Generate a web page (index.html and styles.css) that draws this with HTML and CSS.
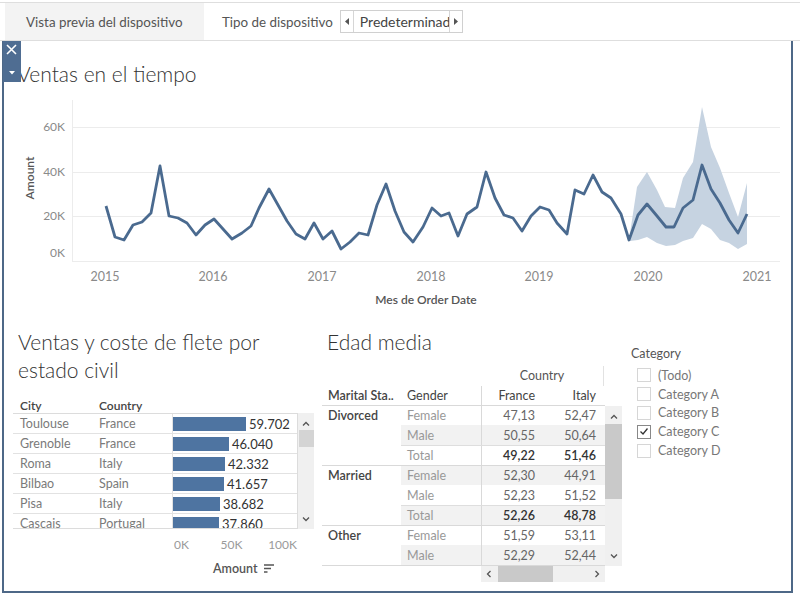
FILE: index.html
```html
<!DOCTYPE html>
<html lang="es">
<head>
<meta charset="utf-8">
<title>Vista previa del dispositivo</title>
<link rel="stylesheet" href="styles.css">
</head>
<body>
<div class="topbar">
  <div class="tab">Vista previa del dispositivo</div>
  <div class="devtype">
    <span class="devlabel">Tipo de dispositivo</span>
    <div class="select">
      <span class="sarrow left"><svg width="4" height="7" viewBox="0 0 4 7"><path d="M4 0 L0 3.5 L4 7 Z" fill="#555"/></svg></span>
      <span class="selval">Predeterminado</span>
      <span class="sarrow right"><svg width="4" height="7" viewBox="0 0 4 7"><path d="M0 0 L4 3.5 L0 7 Z" fill="#555"/></svg></span>
    </div>
  </div>
</div>

<div class="frame">
  <div class="closebtn">
    <svg width="18" height="41" viewBox="0 0 18 41">
      <path d="M4 4 L13 13 M13 4 L4 13" stroke="#fff" stroke-width="1.6" fill="none"/>
      <path d="M6 30 L12 30 L9 33.5 Z" fill="#fff"/>
    </svg>
  </div>

  <section class="timeline">
    <h1 class="title main-title">Ventas en el tiempo</h1>
    <svg class="linechart" width="787" height="228" viewBox="4 88 787 228">
      <g class="grid">
        <line x1="72" y1="127.5" x2="780" y2="127.5"/>
        <line x1="72" y1="172.5" x2="780" y2="172.5"/>
        <line x1="72" y1="216.5" x2="780" y2="216.5"/>
        <line x1="72" y1="261.5" x2="780" y2="261.5"/>
        <line x1="72.5" y1="100" x2="72.5" y2="262"/>
      </g>
      <g class="ylab">
        <text x="65" y="131">60K</text>
        <text x="65" y="176">40K</text>
        <text x="65" y="220">20K</text>
        <text x="65" y="257">0K</text>
      </g>
      <text class="axtitle" transform="translate(34,178) rotate(-90)">Amount</text>
      <g class="xlab">
        <text x="105" y="281">2015</text>
        <text x="213" y="281">2016</text>
        <text x="322" y="281">2017</text>
        <text x="431" y="281">2018</text>
        <text x="539" y="281">2019</text>
        <text x="648" y="281">2020</text>
        <text x="757" y="281">2021</text>
      </g>
      <text class="axtitle" x="426" y="304">Mes de Order Date</text>
      <polygon class="band" points="629,240 637,187 647,172 657,190 665,207 675,208 683,178 693,162 702,107 711,147 720,168 729,193 738,217 747,183 747,244 738,249 729,243 720,240 711,229 702,224 693,238 683,241 675,245 666,246 657,243 647,237 638,240 630,241"/>
      <polyline class="line" points="106,206 115,237 124,240 133,225 142,222 151,213 160,166 169,216 178,218 187,223 196,235 205,225 214,219 223,229 232,239 242,233 251,226 259,208 269,189 278,205 287,221 296,234 305,239 314,223 323,239 332,231 341,249 350,242 359,233 368,235 377,205 386,184 395,211 404,232 413,242 423,227 432,208 441,216 449,213 458,236 467,214 477,207 486,172 495,198 504,215 513,218 522,231 531,216 540,207 549,210 557,223 567,234 575,190 584,194 593,175 602,192 611,198 621,214 629,240 638,215 647,204 657,216 666,227 674,227 683,208 693,200 702,165 711,189 720,203 729,220 738,233 747,214"/>
    </svg>
  </section>

  <section class="bottom">
    <div class="panel left">
      <h2 class="title sub-title">Ventas y coste de flete por estado civil</h2>
      <div class="bars">
        <div class="bhead"><span class="bc1">City</span><span class="bc2">Country</span></div>
        <div class="bbody-wrap">
          <div class="bbody">
            <div class="brow"><span class="bc1">Toulouse</span><span class="bc2">France</span><span class="bcell"><i class="bar" style="width:73px"></i><b>59.702</b></span></div>
            <div class="brow"><span class="bc1">Grenoble</span><span class="bc2">France</span><span class="bcell"><i class="bar" style="width:56px"></i><b>46.040</b></span></div>
            <div class="brow"><span class="bc1">Roma</span><span class="bc2">Italy</span><span class="bcell"><i class="bar" style="width:52px"></i><b>42.332</b></span></div>
            <div class="brow"><span class="bc1">Bilbao</span><span class="bc2">Spain</span><span class="bcell"><i class="bar" style="width:51px"></i><b>41.657</b></span></div>
            <div class="brow"><span class="bc1">Pisa</span><span class="bc2">Italy</span><span class="bcell"><i class="bar" style="width:47px"></i><b>38.682</b></span></div>
            <div class="brow"><span class="bc1">Cascais</span><span class="bc2">Portugal</span><span class="bcell"><i class="bar" style="width:46px"></i><b>37.860</b></span></div>
          </div>
          <div class="vscroll small">
            <svg class="arrow-up" width="8" height="5" viewBox="0 0 8 5"><path d="M1 4.5 L4 1.5 L7 4.5" stroke="#555" stroke-width="1.3" fill="none"/></svg>
            <div class="thumb"></div>
            <svg class="arrow-down" width="8" height="5" viewBox="0 0 8 5"><path d="M1 0.5 L4 3.5 L7 0.5" stroke="#555" stroke-width="1.3" fill="none"/></svg>
          </div>
        </div>
        <div class="baxis"><span>0K</span><span>50K</span><span>100K</span></div>
        <div class="bamount">Amount
          <svg width="10" height="9" viewBox="0 0 10 9"><path d="M0 1 H10 M0 4.5 H7 M0 8 H3.5" stroke="#555" stroke-width="1.5"/></svg>
        </div>
      </div>
    </div>

    <div class="panel mid">
      <h2 class="title sub-title">Edad media</h2>
      <div class="pivot">
        <div class="phead">
          <div class="ph1"><span class="ph-country">Country</span></div>
          <div class="ph2"><span class="pm">Marital Sta..</span><span class="pg">Gender</span><span class="pv first">France</span><span class="pv">Italy</span></div>
        </div>
        <div class="pbody-wrap">
          <div class="pbody">
            <div class="pgroup">
              <div class="pm">Divorced</div>
              <div class="prows">
                <div class="prow"><span class="pg">Female</span><span class="pv first">47,13</span><span class="pv">52,47</span></div>
                <div class="prow band"><span class="pg">Male</span><span class="pv first">50,55</span><span class="pv">50,64</span></div>
                <div class="prow total"><span class="pg">Total</span><span class="pv first">49,22</span><span class="pv">51,46</span></div>
              </div>
            </div>
            <div class="pgroup">
              <div class="pm">Married</div>
              <div class="prows">
                <div class="prow band"><span class="pg">Female</span><span class="pv first">52,30</span><span class="pv">44,91</span></div>
                <div class="prow"><span class="pg">Male</span><span class="pv first">52,23</span><span class="pv">51,52</span></div>
                <div class="prow total band"><span class="pg">Total</span><span class="pv first">52,26</span><span class="pv">48,78</span></div>
              </div>
            </div>
            <div class="pgroup last">
              <div class="pm">Other</div>
              <div class="prows">
                <div class="prow"><span class="pg">Female</span><span class="pv first">51,59</span><span class="pv">53,11</span></div>
                <div class="prow band"><span class="pg">Male</span><span class="pv first">52,29</span><span class="pv">52,44</span></div>
              </div>
            </div>
          </div>
          <div class="vscroll tall">
            <svg class="arrow-up" width="8" height="5" viewBox="0 0 8 5"><path d="M1 4.5 L4 1.5 L7 4.5" stroke="#555" stroke-width="1.3" fill="none"/></svg>
            <div class="thumb"></div>
            <svg class="arrow-down" width="8" height="5" viewBox="0 0 8 5"><path d="M1 0.5 L4 3.5 L7 0.5" stroke="#555" stroke-width="1.3" fill="none"/></svg>
          </div>
        </div>
        <div class="hscroll">
          <svg width="5" height="8" viewBox="0 0 5 8"><path d="M4.5 1 L1.5 4 L4.5 7" stroke="#555" stroke-width="1.3" fill="none"/></svg>
          <div class="hthumb"></div>
          <svg class="hright" width="5" height="8" viewBox="0 0 5 8"><path d="M0.5 1 L3.5 4 L0.5 7" stroke="#555" stroke-width="1.3" fill="none"/></svg>
        </div>
      </div>
    </div>

    <div class="panel right">
      <div class="ftitle">Category</div>
      <ul class="flist">
        <li><span class="cb"></span>(Todo)</li>
        <li><span class="cb"></span>Category A</li>
        <li><span class="cb"></span>Category B</li>
        <li><span class="cb checked"><svg width="10" height="9" viewBox="0 0 10 9"><path d="M1.5 4.5 L4 7 L8.5 1.5" stroke="#333" stroke-width="1.3" fill="none"/></svg></span>Category C</li>
        <li><span class="cb"></span>Category D</li>
      </ul>
    </div>
  </section>
</div>
</body>
</html>
```
FILE: styles.css
```css
* { box-sizing: border-box; }
html, body { margin: 0; padding: 0; }
body {
  width: 800px;
  height: 595px;
  overflow: hidden;
  background: #fff;
  font-family: "Lato", "Open Sans", sans-serif;
  color: #333;
}

/* top bar */
.topbar {
  margin-top: 2px;
  height: 39px;
  border-top: 1px solid #dedede;
  border-bottom: 1px solid #dedede;
  display: flex;
}
.tab {
  margin-left: 5px;
  width: 199px;
  background: #f3f3f3;
  padding-left: 21px;
  display: flex;
  align-items: center;
  font-size: 13.4px;
  color: #555;
}
.devtype {
  display: flex;
  align-items: center;
  padding-left: 18px;
  font-size: 13.4px;
  color: #555;
}
.select {
  margin-left: 7px;
  width: 123px;
  height: 23px;
  border: 1px solid #d0d0d0;
  display: flex;
  align-items: stretch;
}
.sarrow {
  width: 13px;
  display: flex;
  align-items: center;
  justify-content: center;
  flex: none;
}
.sarrow.left { border-right: 1px solid #d6d6d6; }
.sarrow.right { border-left: 1px solid #d6d6d6; }
.selval {
  flex: 1;
  overflow: hidden;
  white-space: nowrap;
  padding-left: 6px;
  line-height: 21px;
  font-size: 14px;
  color: #444;
}

/* frame */
.frame {
  position: relative;
  margin-left: 2px;
  width: 791px;
  height: 552px;
  border: 2px solid #4e6887;
  border-top: 0;
}
.closebtn {
  position: absolute;
  left: -1px;
  top: 0;
  width: 18px;
  height: 41px;
  background: #4f6d92;
}
.closebtn svg { display: block; }

.title {
  margin: 0;
  font-weight: 300;
  color: #333;
  font-size: 21px;
}
.main-title {
  padding: 21px 0 2px 13px;
  line-height: 24px;
}
.linechart { display: block; }
.grid line { stroke: #ececec; stroke-width: 1; }
.ylab text { font-size: 12px; fill: #8a8a8a; text-anchor: end; font-family: "Lato", sans-serif; }
.xlab text { font-size: 12.5px; fill: #8a8a8a; text-anchor: middle; font-family: "Lato", sans-serif; }
.axtitle { font-size: 12px; font-weight: 600; fill: #555; text-anchor: middle; font-family: "Lato", sans-serif; }
.band { fill: #c6d3e1; }
.line { fill: none; stroke: #4a6a8f; stroke-width: 2.8; stroke-linejoin: round; }

/* bottom */
.bottom {
  display: flex;
  height: 275px;
}
.panel { padding-top: 12px; }
.panel.left { width: 314px; }
.panel.mid { width: 307px; }
.panel.right { flex: 1; padding-top: 30px; }

.sub-title {
  line-height: 28px;
}
.left .sub-title { padding-left: 14px; width: 295px; }
.mid .sub-title { padding-left: 9px; }

/* bar table */
.bars { margin-left: 9px; margin-top: 13px; }
.bhead {
  display: flex;
  height: 16px;
  align-items: center;
  font-size: 12px;
  font-weight: 600;
  color: #444;
}
.bc1 { width: 79px; padding-left: 7px; flex: none; }
.bc2 { width: 80px; padding-left: 7px; flex: none; }
.bbody-wrap {
  display: flex;
  height: 116px;
}
.bbody {
  width: 285px;
  height: 116px;
  overflow: hidden;
  border-top: 1px solid #dcdcdc;
  border-bottom: 1px solid #dcdcdc;
  border-right: 1px solid #dcdcdc;
}
.brow {
  display: flex;
  height: 20px;
  border-bottom: 1px solid #e2e2e2;
  align-items: center;
  font-size: 12.5px;
  color: #7a7a7a;
  flex: none;
}
.bcell {
  flex: 1;
  height: 100%;
  border-left: 1px solid #e2e2e2;
  display: flex;
  align-items: center;
}
.bar {
  display: block;
  height: 14px;
  background: #4e74a1;
  flex: none;
}
.bcell b {
  font-weight: 400;
  color: #333;
  padding-left: 3px;
  font-size: 13px;
}
.vscroll {
  width: 16px;
  background: #f0f0f0;
  display: flex;
  flex-direction: column;
  align-items: center;
  flex: none;
}
.vscroll.small { height: 116px; }
.vscroll .arrow-up { margin-top: 8px; flex: none; }
.vscroll .arrow-down { margin-top: auto; margin-bottom: 7px; flex: none; }
.vscroll.small .thumb {
  margin-top: 4px;
  width: 15px;
  height: 17px;
  background: #d4d4d4;
}
.baxis {
  width: 284px;
  display: flex;
  justify-content: space-between;
  padding-left: 161px;
  margin-top: 8px;
  font-size: 12px;
  color: #9a9a9a;
  height: 16px;
  line-height: 16px;
}
.baxis span:nth-child(2) { margin-left: 6px; }
.bamount {
  width: 285px;
  margin-top: 8px;
  display: flex;
  align-items: center;
  gap: 6px;
  font-size: 12.5px;
  font-weight: 600;
  color: #555;
  padding-left: 200px;
}

/* pivot */
.pivot { margin-left: 4px; margin-top: 10px; }
.phead { width: 283px; border-bottom: 1px solid #d9d9d9; }
.ph1 { height: 20px; display: flex; padding-left: 159px; }
.ph-country {
  width: 123px;
  border-right: 1px solid #e2e2e2;
  text-align: center;
  font-size: 12.5px;
  line-height: 20px;
  color: #555;
}
.ph2 {
  height: 19px;
  display: flex;
  align-items: center;
  font-size: 12.5px;
  color: #444;
}
.ph2 .pm { font-weight: 600; }
.ph2 .pv { height: 100%; display: flex; align-items: center; justify-content: flex-end; }
.pm { width: 79px; padding-left: 6px; flex: none; white-space: nowrap; }
.pg { width: 80px; padding-left: 6px; flex: none; }
.pv { width: 61px; padding-right: 8px; text-align: right; flex: none; }
.pv.first { width: 62px; border-left: 1px solid #d9d9d9; }
.pbody-wrap { display: flex; height: 160px; }
.pbody {
  width: 283px;
  height: 160px;
  overflow: hidden;
  border-bottom: 1px solid #d9d9d9;
}
.pgroup {
  display: flex;
  border-bottom: 1px solid #d9d9d9;
}
.pgroup > .pm {
  font-size: 12.5px;
  font-weight: 600;
  color: #444;
  line-height: 19px;
}
.prows { flex: 1; }
.prow {
  display: flex;
  height: 20px;
  align-items: stretch;
  font-size: 12.5px;
  color: #666;
}
.prow:first-child { height: 19px; }
.prow .pg { color: #999; display: flex; align-items: center; }
.prow .pv { display: flex; align-items: center; justify-content: flex-end; }
.prow.band { background: #f2f2f2; }
.prow.total { border-top: 1px solid #dedede; }
.prow.total .pv { color: #333; font-weight: 600; }
.vscroll.tall { height: 160px; width: 17px; }
.vscroll.tall .thumb {
  margin-top: 5px;
  width: 17px;
  height: 75px;
  background: #c9c9c9;
}
.hscroll {
  margin-left: 159px;
  width: 124px;
  height: 16px;
  background: #f0f0f0;
  display: flex;
  align-items: center;
  padding-left: 5px;
}
.hthumb {
  margin-left: 7px;
  width: 55px;
  height: 16px;
  background: #c9c9c9;
}
.hright { margin-left: auto; margin-right: 5px; }

/* filter */
.ftitle {
  padding-left: 6px;
  font-size: 12.5px;
  line-height: 16px;
  color: #555;
}
.flist {
  list-style: none;
  margin: 4px 0 0 0;
  padding: 0 0 0 12px;
}
.flist li {
  height: 18.8px;
  display: flex;
  align-items: center;
  gap: 7px;
  font-size: 12.5px;
  color: #777;
}
.cb {
  width: 14px;
  height: 14px;
  border: 1px solid #d6d6d6;
  flex: none;
  display: flex;
  align-items: center;
  justify-content: center;
}
.cb.checked { border-color: #888; }
```
